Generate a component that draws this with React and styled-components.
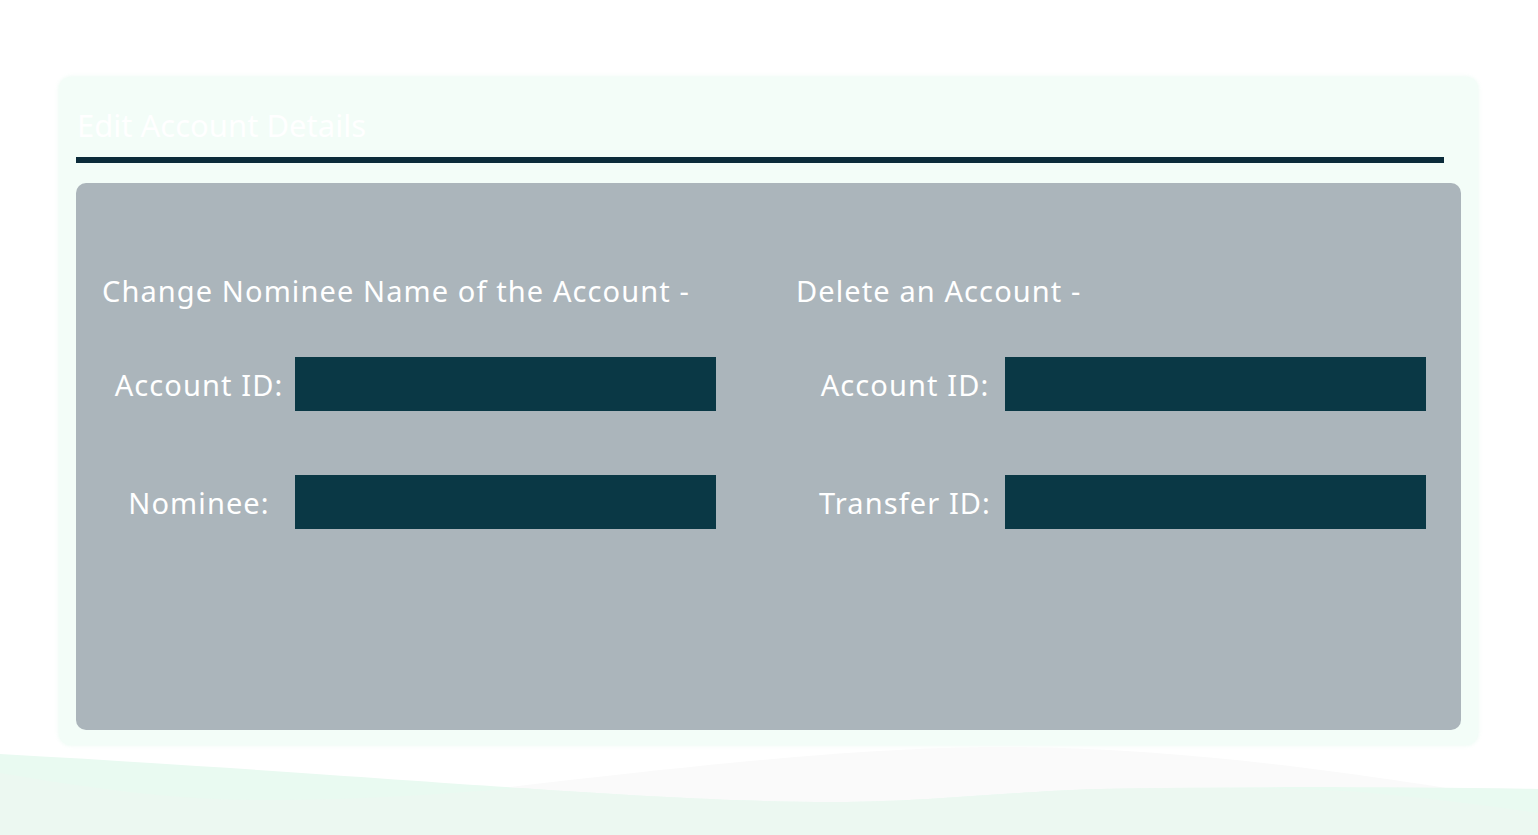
import React from 'react';
import styled, { createGlobalStyle } from 'styled-components';

let GlobalStyle = createGlobalStyle`
    html, body {
        margin: 0;
        padding: 0;
        background: #ffffff;
        font-family: "Noto Sans", "Open Sans", sans-serif;
    }
    * { box-sizing: border-box; }
`
let Page = styled.div`
    width: 1538px;
    height: 835px;
    overflow: hidden;
    padding-top: 77px;
`
let Card = styled.section`
    width: 1419px;
    height: 668px;
    margin-left: 59px;
    padding: 20px 17px 15px 17px;
    background: #f3fdf8;
    border-radius: 12px;
    box-shadow: 0 0 4px rgba(225, 248, 236, 0.8);
`
let Title = styled.h1`
    margin: 0 0 0 1px;
    height: 60px;
    line-height: 56px;
    font-size: 31px;
    font-weight: 400;
    color: #ffffff;
`
let Rule = styled.div`
    width: 1368px;
    height: 6px;
    background: #0b2b3a;
`
let Panel = styled.div`
    margin-top: 20px;
    height: 547px;
    background: #abb5bb;
    border-radius: 10px;
    padding: 88px 0 0 27px;
    display: flex;
`
let Section = styled.div`
    width: ${p => p.width}px;
    display: flex;
    flex-direction: column;
`
let Heading = styled.h2`
    margin: 0 0 46px -1px;
    height: 40px;
    line-height: 40px;
    font-size: 29px;
    letter-spacing: 1.1px;
    font-weight: 400;
    color: #ffffff;
    white-space: nowrap;
`
let Row = styled.div`
    display: flex;
    align-items: center;
    margin-bottom: 64px;
`
let Label = styled.label`
    width: ${p => p.width}px;
    padding-left: ${p => p.offset || 0}px;
    text-align: center;
    font-size: 29px;
    letter-spacing: 1.1px;
    color: #ffffff;
    white-space: nowrap;
`
let Input = styled.input`
    width: 421px;
    height: 54px;
    border: none;
    outline: none;
    background: #0a3845;
    color: #ffffff;
    font-size: 20px;
    padding: 0 12px;
    font-family: inherit;
`
let Waves = styled.svg`
    display: block;
    width: 1538px;
    height: 90px;
`

let Form = ({ heading, fields, width, labelWidth, offset }) => (
    <Section width={width}>
        <Heading>{heading}</Heading>
        {fields.map(f => (
            <Row key={f}>
                <Label width={labelWidth} offset={offset}>{f}</Label>
                <Input type="text" />
            </Row>
        ))}
    </Section>
)

export default function App() {
    return (
        <>
            <GlobalStyle />
            <Page>
                <Card>
                    <Title>Edit Account Details</Title>
                    <Rule />
                    <Panel>
                        <Form
                            heading="Change Nominee Name of the Account -"
                            fields={['Account ID:', 'Nominee:']}
                            width={694}
                            labelWidth={192}
                        />
                        <Form
                            heading="Delete an Account -"
                            fields={['Account ID:', 'Transfer ID:']}
                            width={640}
                            labelWidth={208}
                            offset={8}
                        />
                    </Panel>
                </Card>
                <Waves viewBox="0 745 1538 90" preserveAspectRatio="none">
                    <path d="M400 800 C 650 770, 850 747, 1000 747 C 1200 747, 1400 780, 1538 803 L1538 835 L400 835 Z" fill="#fafafa" />
                    <path d="M0 754 C 200 765, 400 780, 520 788 C 650 797, 750 802, 833 802 C 930 802, 1000 792, 1100 789 C 1250 786, 1400 787, 1538 789 L1538 835 L0 835 Z" fill="#e9faf1" />
                    <path d="M0 773 C 100 790, 180 800, 260 800 C 380 800, 460 792, 520 788 C 650 797, 750 802, 833 802 C 930 802, 1000 792, 1100 789 C 1200 787, 1300 788, 1360 792 C 1430 798, 1490 806, 1538 813 L1538 835 L0 835 Z" fill="#ecf8f1" />
                </Waves>
            </Page>
        </>
    );
}
